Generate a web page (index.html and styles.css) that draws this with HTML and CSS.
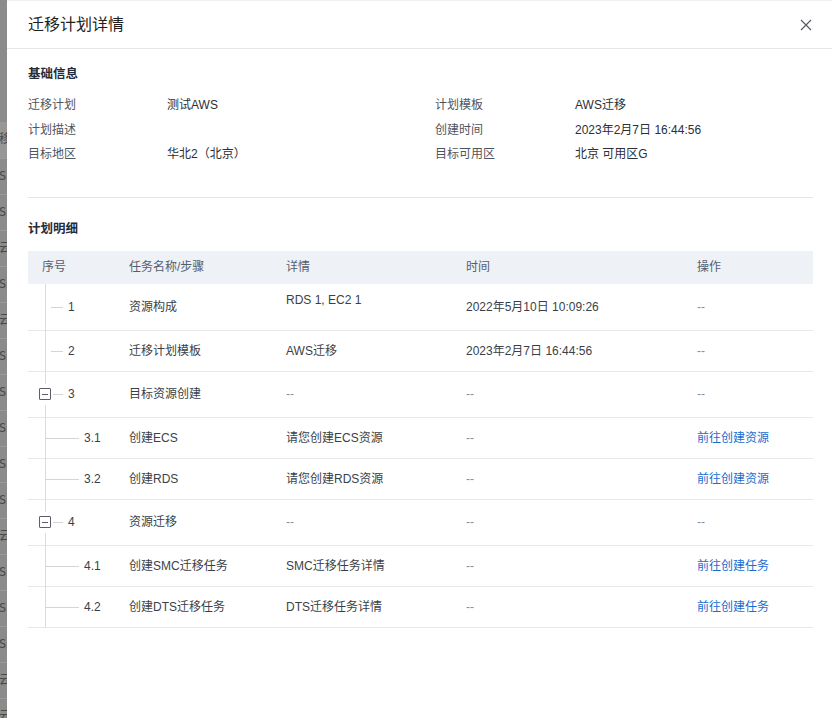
FILE: index.html
```html
<!DOCTYPE html>
<html lang="zh-CN">
<head>
<meta charset="utf-8">
<title>迁移计划详情</title>
<link rel="stylesheet" href="styles.css">
</head>
<body>
<div class="page">
  <div class="backdrop" aria-hidden="true">
    <div class="bg-row hover">迁移</div>
    <div class="bg-row">Si</div>
    <div class="bg-row">Si</div>
    <div class="bg-row">云</div>
    <div class="bg-row">Si</div>
    <div class="bg-row">云</div>
    <div class="bg-row">Si</div>
    <div class="bg-row">Si</div>
    <div class="bg-row">Si</div>
    <div class="bg-row">Si</div>
    <div class="bg-row">Si</div>
    <div class="bg-row">云</div>
    <div class="bg-row">Si</div>
    <div class="bg-row">Si</div>
    <div class="bg-row">Si</div>
    <div class="bg-row">云</div>
    <div class="bg-row">云</div>
  </div>

  <div class="drawer">
    <div class="drawer-header">
      <h1 class="drawer-title">迁移计划详情</h1>
      <button class="close" aria-label="关闭">
        <svg width="12" height="12" viewBox="0 0 12 12"><path d="M1 1L11 11M11 1L1 11" stroke="#555a63" stroke-width="1.2" fill="none"/></svg>
      </button>
    </div>

    <div class="drawer-body">
      <h2 class="section-title">基础信息</h2>
      <div class="info-grid">
        <div class="label">迁移计划</div><div class="value">测试AWS</div>
        <div class="label">计划模板</div><div class="value">AWS迁移</div>
        <div class="label">计划描述</div><div class="value"></div>
        <div class="label">创建时间</div><div class="value">2023年2月7日 16:44:56</div>
        <div class="label">目标地区</div><div class="value">华北2（北京）</div>
        <div class="label">目标可用区</div><div class="value">北京 可用区G</div>
      </div>

      <div class="divider"></div>

      <h2 class="section-title second">计划明细</h2>

      <div class="table">
        <div class="row head">
          <div class="cell first">序号</div>
          <div class="cell">任务名称/步骤</div>
          <div class="cell">详情</div>
          <div class="cell">时间</div>
          <div class="cell">操作</div>
        </div>

        <div class="row tall1">
          <div class="cell tree top"><span class="hline"></span>1</div>
          <div class="cell">资源构成</div>
          <div class="cell top-align">RDS 1, EC2 1</div>
          <div class="cell">2022年5月10日 10:09:26</div>
          <div class="cell muted">--</div>
        </div>

        <div class="row">
          <div class="cell tree top"><span class="hline"></span>2</div>
          <div class="cell">迁移计划模板</div>
          <div class="cell">AWS迁移</div>
          <div class="cell">2023年2月7日 16:44:56</div>
          <div class="cell muted">--</div>
        </div>

        <div class="row parent">
          <div class="cell tree top has-icon"><span class="toggle"></span><span class="hline"></span>3</div>
          <div class="cell">目标资源创建</div>
          <div class="cell muted">--</div>
          <div class="cell muted">--</div>
          <div class="cell muted">--</div>
        </div>

        <div class="row">
          <div class="cell tree child"><span class="hline"></span>3.1</div>
          <div class="cell">创建ECS</div>
          <div class="cell">请您创建ECS资源</div>
          <div class="cell muted">--</div>
          <div class="cell"><a class="link" href="#">前往创建资源</a></div>
        </div>

        <div class="row">
          <div class="cell tree child"><span class="hline"></span>3.2</div>
          <div class="cell">创建RDS</div>
          <div class="cell">请您创建RDS资源</div>
          <div class="cell muted">--</div>
          <div class="cell"><a class="link" href="#">前往创建资源</a></div>
        </div>

        <div class="row parent">
          <div class="cell tree top has-icon"><span class="toggle"></span><span class="hline"></span>4</div>
          <div class="cell">资源迁移</div>
          <div class="cell muted">--</div>
          <div class="cell muted">--</div>
          <div class="cell muted">--</div>
        </div>

        <div class="row">
          <div class="cell tree child"><span class="hline"></span>4.1</div>
          <div class="cell">创建SMC迁移任务</div>
          <div class="cell">SMC迁移任务详情</div>
          <div class="cell muted">--</div>
          <div class="cell"><a class="link" href="#">前往创建任务</a></div>
        </div>

        <div class="row">
          <div class="cell tree child"><span class="hline"></span>4.2</div>
          <div class="cell">创建DTS迁移任务</div>
          <div class="cell">DTS迁移任务详情</div>
          <div class="cell muted">--</div>
          <div class="cell"><a class="link" href="#">前往创建任务</a></div>
        </div>
      </div>
    </div>
  </div>
</div>
</body>
</html>
```

FILE: styles.css
```css
* { box-sizing: border-box; }

html, body {
  margin: 0;
  padding: 0;
  height: 100%;
}

body {
  font-family: "Liberation Sans", "Noto Sans CJK SC", sans-serif;
  font-size: 12px;
  color: #333;
  background: #fff;
}

.page {
  display: flex;
  height: 718px;
  overflow: hidden;
}

/* masked page behind the drawer */
.backdrop {
  width: 7px;
  flex: none;
  background: #8b8b8b;
  padding-top: 122px;
  overflow: hidden;
}

.bg-row {
  height: 36px;
  border-top: 1px solid #9b9b9b;
  line-height: 35px;
  font-family: "DejaVu Sans Mono", "Noto Sans CJK SC", monospace;
  font-size: 12px;
  color: #4a4a4a;
  white-space: nowrap;
  text-indent: -1px;
}

.bg-row.hover {
  background: #979797;
  border-top: none;
  text-indent: -13px;
}

/* drawer */
.drawer {
  flex: 1;
  background: #fff;
  display: flex;
  flex-direction: column;
  border-top: 1px solid #f0f0f0;
}

.drawer-header {
  height: 48px;
  border-bottom: 1px solid #e6e6e6;
  display: flex;
  align-items: center;
  justify-content: space-between;
  padding: 0 19px 0 21px;
}

.drawer-title {
  margin: 0;
  font-size: 16px;
  font-weight: 400;
  color: #1f1f1f;
  line-height: 22px;
}

.close {
  border: none;
  background: none;
  padding: 0;
  width: 14px;
  height: 14px;
  display: flex;
  align-items: center;
  justify-content: center;
  cursor: pointer;
}

.drawer-body {
  padding: 0 19px 0 21px;
}

.section-title {
  margin: 15px 0 0;
  font-size: 12.5px;
  font-weight: 700;
  color: #252b3a;
  line-height: 20px;
}

.section-title.second {
  margin-top: 21px;
}

.info-grid {
  display: grid;
  grid-template-columns: 139px 268px 140px 1fr;
  grid-auto-rows: 24.5px;
  align-items: center;
  margin-top: 9px;
}

.label {
  color: #4f545d;
  line-height: 18px;
}

.value {
  color: #2b2f36;
  line-height: 18px;
}

.divider {
  height: 1px;
  background: #e5e5e5;
  margin-top: 30px;
}

/* table */
.table {
  margin-top: 12px;
}

.row {
  display: grid;
  grid-template-columns: 101px 157px 180px 231px 1fr;
  align-items: center;
  height: 41px;
  border-bottom: 1px solid #e8e8e8;
}

.row.head {
  height: 33px;
  background: #eef1f6;
  border-bottom: none;
  color: #575d6c;
}

.row.tall1 { height: 47px; }
.row.parent { height: 46px; }

.cell {
  line-height: 18px;
  color: #3b3f47;
  white-space: nowrap;
  align-self: center;
}

.row.head .cell { color: #575d6c; }

.cell.first { padding-left: 14px; }

.cell.muted { color: #8a8e99; }

.cell.top-align {
  align-self: start;
  padding-top: 7px;
}

.link {
  color: #1a6dd0;
  text-decoration: none;
}

/* tree column */
.cell.tree {
  position: relative;
  align-self: stretch;
  display: flex;
  align-items: center;
  color: #3b3f47;
}

.cell.tree::before {
  content: "";
  position: absolute;
  left: 17px;
  top: 0;
  bottom: -1px;
  width: 1px;
  background: #dcdcdc;
}

.cell.tree.top { padding-left: 40px; }
.cell.tree.child { padding-left: 56px; }

.hline {
  position: absolute;
  top: 50%;
  height: 1px;
  background: #d4d4d4;
}

.cell.tree.top .hline { left: 23px; width: 12px; }
.cell.tree.child .hline { left: 17px; width: 34px; }
.cell.tree.has-icon .hline { left: 25px; width: 10px; }

.cell.tree.has-icon::before {
  top: 0;
  bottom: auto;
  height: 12px;
}

.cell.tree.has-icon::after {
  content: "";
  position: absolute;
  left: 17px;
  top: 33px;
  bottom: -1px;
  width: 1px;
  background: #dcdcdc;
}

.toggle {
  position: absolute;
  left: 11px;
  top: 50%;
  margin-top: -6px;
  width: 12px;
  height: 12px;
  border: 1px solid #5a5e66;
  border-radius: 1px;
  background: #fff;
}

.toggle::after {
  content: "";
  position: absolute;
  left: 2px;
  right: 2px;
  top: 4.5px;
  height: 1px;
  background: #5a5e66;
}
```
